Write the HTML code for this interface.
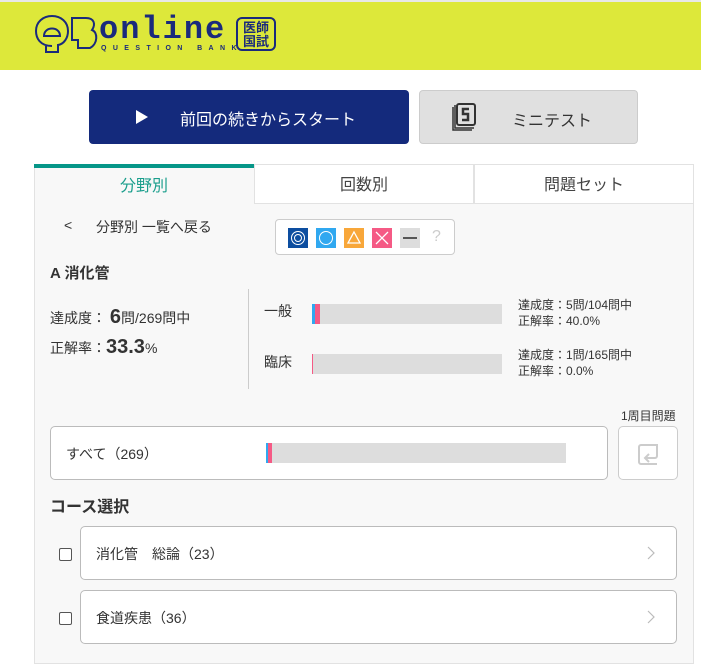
<!DOCTYPE html>
<html><head><meta charset="utf-8"><style>
*{margin:0;padding:0;box-sizing:border-box}
body{width:701px;height:650px;overflow:hidden;background:#fff;font-family:"Liberation Sans","Noto Sans CJK JP",sans-serif;color:#333;position:relative}
.a{position:absolute}
.hdr{left:0;top:0;width:701px;height:70px;background:#dde83a;border-top:2px solid #e8e8e8}
.logo{color:#1a2a7c}
.btn1{left:89px;top:90px;width:320px;height:54px;background:#142a7c;border-radius:4px;color:#fff;font-size:16px}
.btn2{left:419px;top:90px;width:219px;height:54px;background:#e0e0e0;border:1px solid #ccc;border-radius:4px;font-size:16px}
.panel{left:34px;top:164px;width:660px;height:500px;background:#f8f8f8;border:1px solid #e2e2e2}
.tab{top:164px;height:40px;font-size:16px;text-align:center;line-height:42px;color:#444}
.bar{background:#ddd;height:20px}
.card{background:#fff;border:1px solid #bbb;border-radius:5px}
.cb{width:13px;height:13px;border:1px solid #555;border-radius:2px;background:#fff}
.ic{width:20px;height:20px;top:228px}
</style></head><body>
<div class="a hdr"></div>
<svg class="a" style="left:34px;top:14px" width="66" height="42" viewBox="0 0 66 42" fill="none" stroke="#1a2a7c" stroke-width="2">
<path d="M18 32 C6 32 2 24 2 17 C2 8 9 2 18 2 C27 2 34 8 34 17 C34 24 30 30 24 31 L24 38 L12 38 L12 32"/>
<path d="M10 22 C10 12 26 12 26 22 Z"/>
<path d="M38 4 L52 4 C60 4 62 10 58 16 C64 18 64 30 56 34 L44 34 L44 26 L38 26 Z"/>
</svg>
<div class="a logo" style="left:99px;top:12px;font-family:'Liberation Mono',monospace;font-size:32px;font-weight:bold;letter-spacing:2px;line-height:36px">online</div>
<div class="a logo" style="left:101px;top:45px;font-size:7px;letter-spacing:6.4px;font-weight:bold;white-space:nowrap">QUESTION BANK</div>
<div class="a logo" style="left:236px;top:17px;width:40px;height:34px;border:2px solid #1a2a7c;border-radius:6px;font-size:13px;font-weight:bold;line-height:14px;text-align:center;padding-top:2px">医師<br>国試</div>

<div class="a btn1"><div class="a" style="left:47px;top:20px;width:0;height:0;border-left:12px solid #fff;border-top:7px solid transparent;border-bottom:7px solid transparent"></div><div class="a" style="left:91px;top:16px">前回の続きからスタート</div></div>
<div class="a btn2">
<svg class="a" style="left:31px;top:12px" width="28" height="30" fill="none" stroke="#333" stroke-width="1.5"><path d="M2 4 V27 H21"/><path d="M4 2 V25 H23"/><rect x="6" y="1" width="18" height="21" rx="2" stroke-width="2"/><path d="M18 6 H12 V11 H17 V17 H11" stroke-width="2.5"/></svg>
<div class="a" style="left:92px;top:16px">ミニテスト</div></div>

<div class="a panel"></div>
<div class="a tab" style="left:34px;width:220px;border-top:4px solid #069688;color:#1a9e8c;line-height:38px">分野別</div>
<div class="a tab" style="left:254px;width:220px;background:#fff;border:1px solid #e2e2e2">回数別</div>
<div class="a tab" style="left:474px;width:220px;background:#fff;border:1px solid #e2e2e2">問題セット</div>

<div class="a" style="left:64px;top:217px;font-size:14px">&lt;</div>
<div class="a" style="left:96px;top:217px;font-size:14px">分野別 一覧へ戻る</div>
<div class="a" style="left:275px;top:219px;width:180px;height:36px;background:#fff;border:1px solid #ccc;border-radius:4px"></div>
<div class="a ic" style="left:288px;background:#0d4ea0"><div class="a" style="left:3px;top:3px;width:14px;height:14px;border:1.5px solid #fff;border-radius:50%"></div><div class="a" style="left:6px;top:6px;width:8px;height:8px;border:1.5px solid #fff;border-radius:50%"></div></div>
<div class="a ic" style="left:316px;background:#30a8f0"><div class="a" style="left:3px;top:3px;width:14px;height:14px;border:1.5px solid #fff;border-radius:50%"></div></div>
<div class="a ic" style="left:344px;background:#f8a73a"><svg width="20" height="20"><path d="M10 4 L16 15 L4 15 Z" fill="none" stroke="#fff" stroke-width="1.3"/></svg></div>
<div class="a ic" style="left:372px;background:#f55a85"><svg width="20" height="20"><path d="M4 4 L16 16 M16 4 L4 16" stroke="#fff" stroke-width="1.3"/></svg></div>
<div class="a ic" style="left:400px;background:#ddd"><div class="a" style="left:3px;top:9px;width:14px;height:2px;background:#555"></div></div>
<div class="a" style="left:432px;top:228px;color:#ccc;font-size:16px">?</div>

<div class="a" style="left:50px;top:262px;font-size:15px;font-weight:bold">A 消化管</div>
<div class="a" style="left:50px;top:306px;font-size:14px">達成度： <b style="font-size:20px">6</b>問/269問中</div>
<div class="a" style="left:50px;top:336px;font-size:14px">正解率：<b style="font-size:20px">33.3</b>%</div>
<div class="a" style="left:248px;top:289px;width:1px;height:100px;background:#ccc"></div>
<div class="a" style="left:264px;top:301px;font-size:14px">一般</div>
<div class="a bar" style="left:312px;top:304px;width:190px"></div>
<div class="a" style="left:312px;top:304px;width:3px;height:20px;background:#30a8f0"></div>
<div class="a" style="left:315px;top:304px;width:5px;height:20px;background:#f55a85"></div>
<div class="a" style="left:264px;top:352px;font-size:14px">臨床</div>
<div class="a bar" style="left:312px;top:354px;width:190px"></div>
<div class="a" style="left:312px;top:354px;width:1px;height:20px;background:#f55a85"></div>
<div class="a" style="left:518px;top:297px;font-size:12px;line-height:16px">達成度：5問/104問中<br>正解率：40.0%</div>
<div class="a" style="left:518px;top:347px;font-size:12px;line-height:16px">達成度：1問/165問中<br>正解率：0.0%</div>

<div class="a" style="left:621px;top:407px;font-size:12px">1周目問題</div>
<div class="a card" style="left:50px;top:426px;width:558px;height:54px"></div>
<div class="a" style="left:66px;top:444px;font-size:14px">すべて（269）</div>
<div class="a bar" style="left:266px;top:443px;width:300px"></div>
<div class="a" style="left:266px;top:443px;width:2px;height:20px;background:#30a8f0"></div>
<div class="a" style="left:268px;top:443px;width:4px;height:20px;background:#f55a85"></div>
<div class="a card" style="left:618px;top:426px;width:60px;height:54px;border-color:#ccc"><svg class="a" style="left:18px;top:16px" width="24" height="22" fill="none" stroke="#ccc" stroke-width="2"><path d="M2 4 V19 A2 2 0 0 0 4 21 H20 M2 4 A2 2 0 0 1 4 2 H20 V13 A2 2 0 0 1 18 15 H9 M12 11 L8 15 L12 19"/></svg></div>

<div class="a" style="left:50px;top:493px;font-size:16px;font-weight:bold">コース選択</div>
<div class="a cb" style="left:59px;top:548px"></div>
<div class="a card" style="left:80px;top:526px;width:597px;height:54px"></div>
<div class="a" style="left:96px;top:544px;font-size:14px">消化管　総論（23）</div>
<svg class="a" style="left:647px;top:546px" width="8" height="14" fill="none" stroke="#bbb" stroke-width="1.2"><path d="M1 1 L7 7 L1 13"/></svg>
<div class="a cb" style="left:59px;top:612px"></div>
<div class="a card" style="left:80px;top:590px;width:597px;height:54px"></div>
<div class="a" style="left:96px;top:608px;font-size:14px">食道疾患（36）</div>
<svg class="a" style="left:647px;top:610px" width="8" height="14" fill="none" stroke="#bbb" stroke-width="1.2"><path d="M1 1 L7 7 L1 13"/></svg>
</body></html>
